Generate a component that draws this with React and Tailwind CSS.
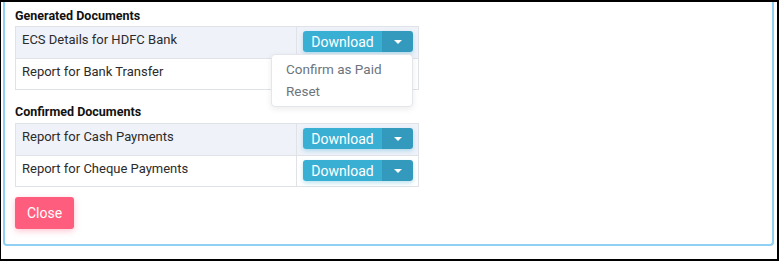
import { useState } from "react";

const generated = [
  { name: "ECS Details for HDFC Bank", open: true },
  { name: "Report for Bank Transfer", hidden: true },
];

const confirmed = [
  { name: "Report for Cash Payments" },
  { name: "Report for Cheque Payments" },
];

function SplitButton() {
  return (
    <div className="flex h-[21px] w-[110px] overflow-hidden rounded-[3px] shadow-[0_2px_4px_rgba(58,176,211,0.35)]">
      <button className="flex flex-1 items-center justify-center bg-[#3aafd4] text-[14px] leading-none text-white">
        Download
      </button>
      <button className="flex w-[31px] items-center justify-center bg-[#3399bd]">
        <span className="h-0 w-0 border-x-[4px] border-t-[4px] border-x-transparent border-t-white" />
      </button>
    </div>
  );
}

function DocTable({ rows }) {
  return (
    <div className="w-[404px] border border-[#dfe3e8]">
      {rows.map((row, i) => (
        <div
          key={row.name}
          className={`relative flex h-[31px] ${i > 0 ? "border-t border-[#dfe3e8]" : ""} ${i % 2 === 0 ? "bg-[#eff2f9]" : "bg-white"}`}
        >
          <div className="w-[281px] border-r border-[#dfe3e8] px-[6px] pt-[3px] text-[13px] text-[#2b2b2b]">{row.name}</div>
          <div className="flex-1 pl-[6px] pt-[4px]">{!row.hidden && <SplitButton />}</div>
          {row.open && (
            <div className="absolute left-[255px] top-[27px] z-10 w-[142px] rounded-[4px] border border-[#e3e6ea] bg-white pb-[4px] pt-[3px] shadow-[0_2px_6px_rgba(0,0,0,0.08)]">
              <div className="px-[14px] text-[13.5px] leading-[22px] text-[#6c757d]">Confirm as Paid</div>
              <div className="px-[14px] text-[13.5px] leading-[22px] text-[#6c757d]">Reset</div>
            </div>
          )}
        </div>
      ))}
    </div>
  );
}

export default function App() {
  const [closed, setClosed] = useState(false);

  return (
    <div className="h-[261px] w-[779px] overflow-hidden border-y-2 border-l border-r-2 border-black bg-white font-['Roboto',sans-serif]">
      <div className="ml-[2px] mr-[3px] h-[244px] rounded-b-[4px] border-x-2 border-b-2 border-[#8fd0f3] px-[10px] pt-[4px]">
        <h3 className="h-[20px] text-[12.5px] font-bold leading-[20px] text-[#111]">Generated Documents</h3>
        <DocTable rows={generated} />
        <h3 className="mt-[10px] h-[23px] pt-[4px] text-[12.5px] font-bold leading-[16px] text-[#111]">Confirmed Documents</h3>
        <DocTable rows={confirmed} />
        {!closed && (
          <button
            onClick={() => setClosed(true)}
            className="mt-[10px] h-[32px] w-[59px] rounded-[3px] bg-[#ff5d7d] text-[14px] text-white shadow-[0_2px_6px_rgba(255,93,125,0.35)]"
          >
            Close
          </button>
        )}
      </div>
    </div>
  );
}
